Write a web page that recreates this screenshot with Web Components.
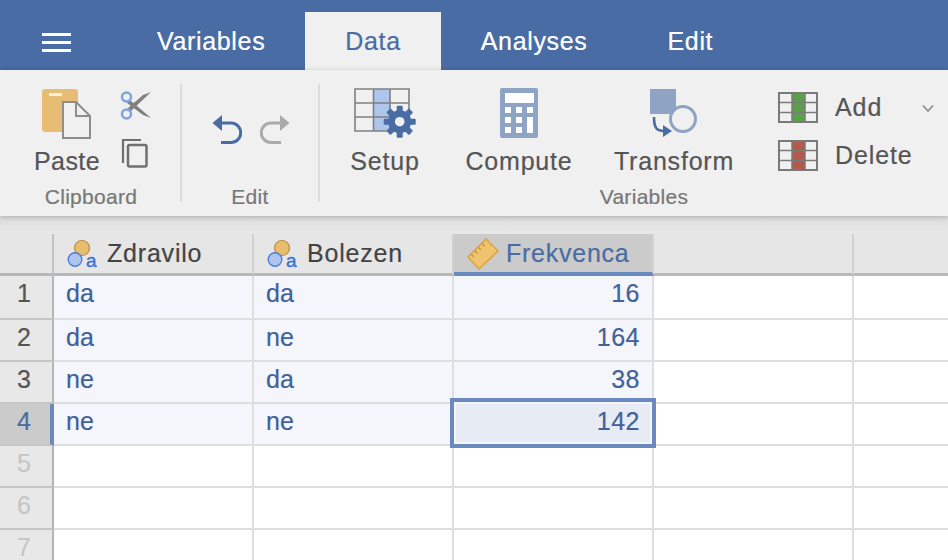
<!DOCTYPE html>
<html>
<head>
<meta charset="utf-8">
<style>
  html, body { margin: 0; height: 560px; overflow: hidden; background: #e8e8e8; }
  body { font-family: "Liberation Sans", Arial, sans-serif; font-size: 25px; -webkit-text-stroke: .2px; }
</style>
</head>
<body>
<app-tabs></app-tabs>
<app-ribbon>
  <ribbon-group label="Clipboard" style="width:180px" pad="34" shift="2">
    <ribbon-button label="Paste" width="66" style="--label-ls:.4px">
      <svg width="52" height="52" viewBox="41 87 52 52">
        <rect x="42" y="88" width="36" height="43" rx="3" fill="#e6bd72"/>
        <rect x="49" y="92" width="13" height="3" fill="#f8efdc"/>
        <path d="M63 101H76L90 115V137H63Z" fill="#f0f0f0" stroke="#8e8e8e" stroke-width="2"/>
        <path d="M76 101V115H90" fill="none" stroke="#8e8e8e" stroke-width="2"/>
      </svg>
    </ribbon-button>
    <div style="display:flex;flex-direction:column;gap:18px;margin-left:20px;margin-top:2px">
      <svg width="32" height="30" viewBox="120 90 32 30">
        <path d="M130 100L151 118L143 115L127 103Z" fill="#808080"/>
        <path d="M130 112L151 92L143 95L128 108Z" fill="#808080"/>
        <circle cx="126.500" cy="97" r="4.500" fill="#f0f0f0" stroke="#7ea3e0" stroke-width="2.500"/>
        <circle cx="126.500" cy="114" r="4.500" fill="#f0f0f0" stroke="#7ea3e0" stroke-width="2.500"/>
      </svg>
      <svg width="30" height="30" viewBox="121 138 30 30">
        <path d="M124 163V140H142" fill="none" stroke="#707070" stroke-width="2.200"/>
        <rect x="129" y="145" width="18.500" height="21.500" rx="1.500" fill="none" stroke="#707070" stroke-width="2.500"/>
      </svg>
    </div>
  </ribbon-group>
  <ribbon-sep></ribbon-sep>
  <ribbon-group label="Edit" style="width:136px" pad="30">
    <div style="display:flex;gap:18px;margin-top:26px">
      <svg width="30" height="32" viewBox="212 114 30 32">
        <path d="M212.500 123L222 115V131Z" fill="#4a6ca4"/>
        <path d="M220 123H231A9.500 9.500 0 0 1 231 142.500H221" fill="none" stroke="#4a6ca4" stroke-width="3"/>
      </svg>
      <svg width="30" height="32" viewBox="260 114 30 32">
        <path d="M289.500 123L280 115V131Z" fill="#aaaaaa"/>
        <path d="M282 123H271A9.500 9.500 0 0 0 271 142.500H281" fill="none" stroke="#aaaaaa" stroke-width="3"/>
      </svg>
    </div>
  </ribbon-group>
  <ribbon-sep></ribbon-sep>
  <ribbon-group label="Variables" style="width:628px" pad="30" shift="20">
    <ribbon-button label="Setup" width="70">
      <svg width="64" height="50" viewBox="353 88 64 50">
        <rect x="374" y="89" width="16" height="42" fill="#aec6ee"/>
        <path d="M355 89H409V131H355ZM355 103H409M355 117H409M373.500 89V131M390 89V131" fill="none" stroke="#808080" stroke-width="1.600"/>
        <g fill="#4a6ca4">
          <circle cx="399.700" cy="121.700" r="11.500"/>
          <rect x="396.700" y="105.700" width="6" height="32" rx="1"/>
          <rect x="396.700" y="105.700" width="6" height="32" rx="1" transform="rotate(45 399.700 121.700)"/>
          <rect x="396.700" y="105.700" width="6" height="32" rx="1" transform="rotate(90 399.700 121.700)"/>
          <rect x="396.700" y="105.700" width="6" height="32" rx="1" transform="rotate(135 399.700 121.700)"/>
        </g>
        <circle cx="399.700" cy="121.700" r="4.800" fill="#f0f0f0"/>
      </svg>
    </ribbon-button>
    <ribbon-button label="Compute" width="108" style="margin-left:45px">
      <svg width="38" height="50" viewBox="500 88 38 50">
        <rect x="500" y="88" width="38" height="50" rx="2" fill="#8fa3c4"/>
        <path fill="#fff" d="M505 93H534V103H505ZM505 107H511V113H505ZM516 107H522V113H516ZM527 107H533V113H527ZM505 117H511V123H505ZM516 117H522V123H516ZM527 117H533V133H527ZM505 127H511V133H505ZM516 127H522V133H516Z"/>
      </svg>
    </ribbon-button>
    <ribbon-button label="Transform" width="120" style="margin-left:41px">
      <svg width="48" height="50" viewBox="650 88 48 50">
        <rect x="650" y="89" width="26" height="25" fill="#8fa3c4"/>
        <circle cx="683" cy="119" r="12.500" fill="#f0f0f0" stroke="#8fa3c4" stroke-width="3"/>
        <path d="M654 117C654 127 656 131 664 131" fill="none" stroke="#4a6ca4" stroke-width="2.600"/>
        <path d="M663 125L672 131L663 137Z" fill="#4a6ca4"/>
      </svg>
    </ribbon-button>
    <div style="display:flex;flex-direction:column;gap:17px;margin-left:44px;margin-top:4px">
      <table-action label="Add" color="#5aa04a"></table-action>
      <table-action label="Delete" color="#b55a4a"></table-action>
    </div>
    <svg width="12" height="9" viewBox="0 0 12 9" style="margin:16px 0 0 9px">
      <path d="M1 1.500L6 7L11 1.500" fill="none" stroke="#8a8a8a" stroke-width="1.600"/>
    </svg>
  </ribbon-group>
</app-ribbon>
<data-sheet></data-sheet>

<script>
class AppTabs extends HTMLElement {
  constructor() {
    super();
    this.attachShadow({ mode: "open" });
    const tabs = ["Variables", "Data", "Analyses", "Edit"];
    this.shadowRoot.innerHTML = `
    <style>
      :host { display: flex; height: 70px; background: #4a6ca4; color: #fff; box-sizing: border-box; padding-top: 12px; }
      .menu { width: 117px; display: flex; align-items: center; padding-left: 42px; box-sizing: border-box; }
      .menu svg { margin-top: 2px; }
      .tab { padding: 0 40px; line-height: 58px; letter-spacing: .66px; }
      .tab.on { background: #f0f0f0; color: #4a6ca4; }
    </style>
    <div class="menu">
      <svg width="29" height="20" viewBox="0 0 29 20" fill="#fff">
        <rect width="29" height="3" y="1"/><rect width="29" height="3" y="9"/><rect width="29" height="3" y="17"/>
      </svg>
    </div>
    ${tabs.map(t => `<div class="tab${t == "Data" ? " on" : ""}">${t}</div>`).join("")}`;
  }
}

class AppRibbon extends HTMLElement {
  constructor() {
    super();
    this.attachShadow({ mode: "open" });
    this.shadowRoot.innerHTML = `
    <style>
      :host { display: flex; align-items: flex-start; height: 146px; background: #f0f0f0; position: relative; z-index: 2;
              box-shadow: 0 1px 5px rgba(0,0,0,.22); }
    </style>
    <slot></slot>`;
  }
}

class RibbonGroup extends HTMLElement {
  constructor() {
    super();
    this.attachShadow({ mode: "open" });
    this.shadowRoot.innerHTML = `
    <style>
      :host { display: flex; flex-direction: column; height: 146px; box-sizing: border-box; padding: 18px 0 7px; flex: none; }
      .items { flex: 1; display: flex; align-items: flex-start; }
      .label { text-align: center; font-size: 21px; line-height: 24px; letter-spacing: .3px; color: #777; }
    </style>
    <div class="items"><slot></slot></div>
    <div class="label"></div>`;
  }
  connectedCallback() {
    this.shadowRoot.querySelector(".label").textContent = this.getAttribute("label");
    this.shadowRoot.querySelector(".items").style.paddingLeft = this.getAttribute("pad") + "px";
    this.shadowRoot.querySelector(".label").style.marginLeft = (this.getAttribute("shift") || 0) + "px";
  }
}

class RibbonSep extends HTMLElement {
  constructor() {
    super();
    this.attachShadow({ mode: "open" });
    this.shadowRoot.innerHTML = `
    <style>:host { display: block; flex: none; width: 2px; height: 118px; margin-top: 14px; background: #dcdcdc; }</style>`;
  }
}

class RibbonButton extends HTMLElement {
  constructor() {
    super();
    this.attachShadow({ mode: "open" });
    this.shadowRoot.innerHTML = `
    <style>
      :host { display: flex; flex-direction: column; align-items: center; flex: none; color: #555; }
      .icon { height: 50px; display: flex; justify-content: center; }
      .label { margin-top: 8px; line-height: 30px; letter-spacing: var(--label-ls, .8px); white-space: nowrap; }
    </style>
    <div class="icon"><slot></slot></div>
    <div class="label"></div>`;
  }
  connectedCallback() {
    this.shadowRoot.querySelector(".label").textContent = this.getAttribute("label");
    this.style.width = this.getAttribute("width") + "px";
  }
}

class TableAction extends HTMLElement {
  constructor() {
    super();
    this.attachShadow({ mode: "open" });
    this.shadowRoot.innerHTML = `
    <style>
      :host { display: flex; align-items: center; gap: 17px; height: 31px; color: #555; letter-spacing: .9px; }
      svg { display: block; }
    </style>
    <svg width="40" height="31" viewBox="0 0 40 31">
      <rect class="col" x="14" y="1" width="13" height="29"/>
      <path d="M1 10.500H39M1 20.500H39M14 1V30M27 1V30" fill="none" stroke="#7a7a7a" stroke-width="1.500"/>
      <path d="M1 1H39V30H1Z" fill="none" stroke="#7a7a7a" stroke-width="2"/>
    </svg>
    <span></span>`;
  }
  connectedCallback() {
    this.shadowRoot.querySelector("span").textContent = this.getAttribute("label");
    this.shadowRoot.querySelector(".col").setAttribute("fill", this.getAttribute("color"));
  }
}

const NOMINAL_ICON = `
  <svg width="32" height="36" viewBox="0 -3 32 36">
    <circle cx="15" cy="9" r="7.500" fill="#e8bd6e" stroke="#bd8f45" stroke-width="1.200"/>
    <circle cx="8" cy="20.500" r="6.800" fill="#aec6ee" stroke="#4f7fd8" stroke-width="1.400"/>
    <text x="19" y="28" font-size="19" fill="#3a72d8" stroke="#3a72d8" stroke-width=".4" font-family="Liberation Sans, sans-serif">a</text>
  </svg>`;

const RULER_ICON = `
  <svg width="32" height="32" viewBox="466 238 32 32">
    <path d="M485 239L497 251L478 269L467 257Z" fill="#efc36f" stroke="#d9a544" stroke-width="1.500"/>
    <path d="M481 243.500L484 246.500M477 247L480 250M473.500 250.500L476.500 253.500M470 254L473 257" stroke="#c8943a" stroke-width="1.200"/>
  </svg>`;

class DataSheet extends HTMLElement {
  constructor() {
    super();
    this.attachShadow({ mode: "open" });
    const rows = [["da", "da", 16], ["da", "ne", 164], ["ne", "da", 38], ["ne", "ne", 142], [], [], []];
    const head = `
      <div class="hd corner"></div>
      <div class="hd">${NOMINAL_ICON}<span>Zdravilo</span></div>
      <div class="hd">${NOMINAL_ICON}<span>Bolezen</span></div>
      <div class="hd sel">${RULER_ICON}<span>Frekvenca</span></div>
      <div class="hd"></div>
      <div class="hd last"></div>`;
    let body = "";
    rows.forEach((r, i) => {
      const used = r.length > 0;
      const cls = used ? "cell used" : "cell";
      const num = (used ? "used" : "") + (i == 3 ? " cur" : "");
      body += `<div class="num ${num}">${i + 1}</div>`;
      body += `<div class="${cls}">${used ? r[0] : ""}</div>`;
      body += `<div class="${cls}">${used ? r[1] : ""}</div>`;
      body += `<div class="${cls} right${i == 3 ? " focus" : ""}">${used ? r[2] : ""}</div>`;
      body += `<div class="cell"></div><div class="cell last"></div>`;
    });
    this.shadowRoot.innerHTML = `
    <style>
      :host { display: block; height: 344px; overflow: hidden; padding-top: 18px; box-sizing: border-box;
              background: linear-gradient(#dcdcdc, #e7e7e7 16px); }
      .grid { display: grid; grid-template-columns: 54px 200px 200px 200px 200px 1fr;
              grid-template-rows: 42px 44px repeat(6, 42px); background: #fff; }
      .hd { box-sizing: border-box; display: flex; align-items: center; gap: 8px; padding-left: 13px; color: #444; letter-spacing: .8px;
            background: #e6e6e6; border-right: 2px solid #d2d2d2; border-bottom: 3px solid #b8b8b8; }
      .hd svg { flex: none; margin-top: 1px; }
      .hd.last { border-right: 0; }
      .hd.corner { border-right-color: #c4c4c4; }
      .hd.sel { background: #cbcbcb; color: #4a6ca4; border-bottom: 4px solid #6a8abf; gap: 7px; letter-spacing: .75px; }
      .num { box-sizing: border-box; text-align: center; color: #c6c6c6; background: #e8e8e8; line-height: 30px; padding: 2px 4px 0 0;
             border-right: 2px solid #b5b5b5; border-bottom: 2px solid #c4c4c4; }
      .num.used { color: #555; }
      .num.cur { color: #4a6ca4; background: #cbcbcb; border-right: 4px solid #6a8abf; padding-right: 2px; }
      .cell { box-sizing: border-box; padding: 2px 12px 0 12px; line-height: 30px; color: #41619b; background: #fff;
              border-right: 2px solid #dedede; border-bottom: 2px solid #dedede; letter-spacing: .2px; }
      .cell.used { background: #f4f6fb; }
      .cell.right { text-align: right; letter-spacing: .5px; }
      .cell.last { border-right: 0; }
      .cell.focus { background: #e7ebf4; position: relative; }
      /* selection frame sits over the neighbouring grid lines */
      .cell.focus::after { content: ""; position: absolute; left: -4px; top: -6px; right: -4px; bottom: -4px;
              border: 4px solid #6a8abf; box-shadow: inset 0 0 0 2px #f4f6fb; }
    </style>
    <div class="grid">${head}${body}</div>`;
  }
}

customElements.define("app-tabs", AppTabs);
customElements.define("app-ribbon", AppRibbon);
customElements.define("ribbon-group", RibbonGroup);
customElements.define("ribbon-sep", RibbonSep);
customElements.define("ribbon-button", RibbonButton);
customElements.define("table-action", TableAction);
customElements.define("data-sheet", DataSheet);
</script>
</body>
</html>
